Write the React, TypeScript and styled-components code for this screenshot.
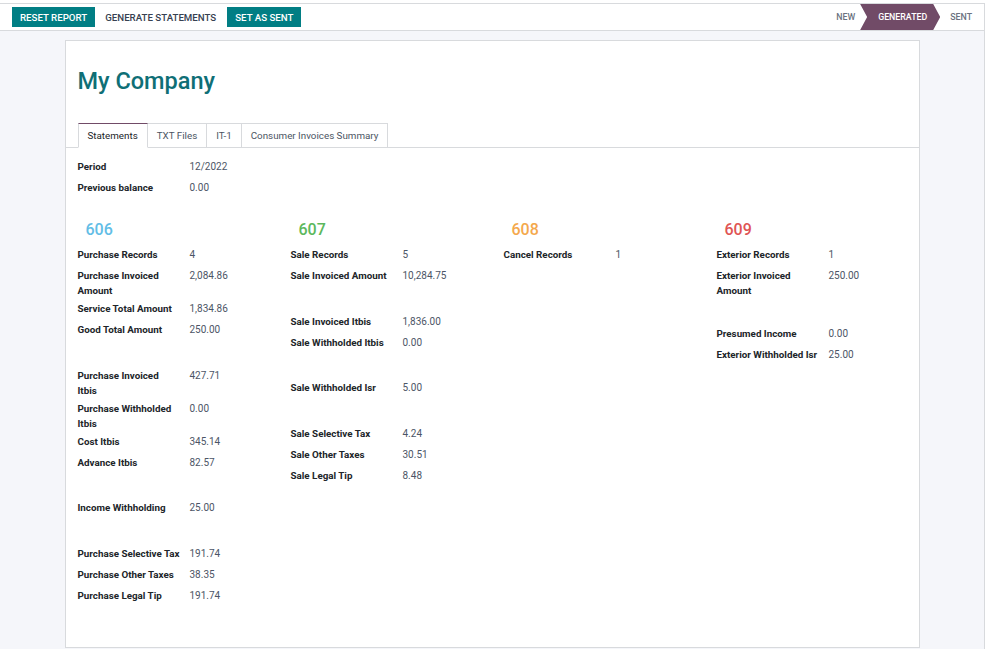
import React from "react";
import styled, { createGlobalStyle } from "styled-components";

const Global = createGlobalStyle`
  html, body { margin: 0; padding: 0; background: #ffffff; }
  body { font-family: Roboto, "Liberation Sans", sans-serif; color: #212529; }
  * { box-sizing: border-box; }
`;

const Frame = styled.div`
  margin-top: 3px;
  width: 985px;
  height: 646px;
  border-top: 1px solid #d8dadd;
  border-right: 1px solid #d8dadd;
  background: #f5f6fa;
  display: flex;
  flex-direction: column;
`;

const ControlPanel = styled.div`
  height: 27px;
  background: #ffffff;
  border-bottom: 1px solid #d8dadd;
  display: flex;
  align-items: stretch;
  justify-content: space-between;
  padding-left: 12px;
`;

const Buttons = styled.div`
  display: flex;
  align-items: center;
`;

const Btn = styled.button<{ $primary?: boolean }>`
  height: 20px;
  padding: 0 8px;
  border: none;
  border-radius: 0;
  font-family: Roboto, "Liberation Sans", sans-serif;
  font-size: 9.7px;
  font-weight: 500;
  text-transform: uppercase;
  cursor: pointer;
  background: ${(p) => (p.$primary ? "#017e84" : "transparent")};
  color: ${(p) => (p.$primary ? "#ffffff" : "#374151")};
  margin-right: ${(p) => (p.$primary ? "2px" : "3px")};
`;

const StatusBar = styled.div`
  display: flex;
  align-items: stretch;
  padding-right: 12px;
`;

const Stage = styled.div<{ $active?: boolean; $pad: string }>`
  display: flex;
  align-items: center;
  font-size: 8.8px;
  font-weight: 500;
  text-transform: uppercase;
  color: ${(p) => (p.$active ? "#ffffff" : "#6b7280")};
  background: ${(p) => (p.$active ? "#714b67" : "transparent")};
  padding: ${(p) => p.$pad};
  clip-path: ${(p) =>
    p.$active
      ? "polygon(0 0, calc(100% - 7px) 0, 100% 50%, calc(100% - 7px) 100%, 0 100%, 7px 50%)"
      : "none"};
`;

const Sheet = styled.div`
  width: 855px;
  height: 608px;
  margin: 9px auto 0;
  background: #ffffff;
  border: 1px solid #d8dadd;
  display: flex;
  flex-direction: column;
`;

const Title = styled.h1`
  margin: 24px 12px 0;
  font-size: 23.5px;
  line-height: 32px;
  font-weight: 500;
  color: #0f6f76;
`;

const TabNav = styled.div`
  margin-top: 26px;
  display: flex;
  padding-left: 12px;
  border-bottom: 1px solid #d8dadd;
`;

const Tab = styled.div<{ $active?: boolean }>`
  height: 25px;
  margin-bottom: -1px;
  padding: 0 9px;
  display: flex;
  align-items: center;
  font-size: 9.8px;
  color: ${(p) => (p.$active ? "#212529" : "#4b5563")};
  background: #ffffff;
  border: 1px solid #d8dadd;
  border-left-width: ${(p) => (p.$active ? "1px" : "0")};
  border-top-color: ${(p) => (p.$active ? "#714b67" : "#d8dadd")};
  border-bottom-color: ${(p) => (p.$active ? "#ffffff" : "#d8dadd")};
`;

const TabContent = styled.div`
  padding: 8px 12px 0;
`;

const Columns = styled.div`
  display: grid;
  grid-template-columns: repeat(4, 213px);
  margin: 0 -12px;
`;

const Column = styled.div`
  padding: 0 12px;
  display: flex;
  flex-direction: column;
`;

const Head = styled.div<{ $color: string }>`
  margin: 22px 0 4px;
  padding-left: 8px;
  font-size: 16px;
  line-height: 20px;
  font-weight: 500;
  color: ${(p) => p.$color};
`;

const Row = styled.div`
  display: grid;
  grid-template-columns: 112px 1fr;
  min-height: 21px;
  align-items: start;
`;

const Label = styled.div`
  padding: 3px 5px 0 0;
  font-size: 9.8px;
  line-height: 15px;
  font-weight: 700;
  color: #212529;
  white-space: pre-line;
`;

const Value = styled.div`
  padding-top: 3px;
  font-size: 10px;
  line-height: 15px;
  color: #4c5566;
`;

const Spacer = styled.div`
  height: 24.5px;
`;

type Item = [string, string] | null;

const sections: { code: string; color: string; items: Item[] }[] = [
  {
    code: "606",
    color: "#62bde6",
    items: [
      ["Purchase Records", "4"],
      ["Purchase Invoiced Amount", "2,084.86"],
      ["Service Total Amount", "1,834.86"],
      ["Good Total Amount", "250.00"],
      null,
      ["Purchase Invoiced\nItbis", "427.71"],
      ["Purchase Withholded Itbis", "0.00"],
      ["Cost Itbis", "345.14"],
      ["Advance Itbis", "82.57"],
      null,
      ["Income Withholding", "25.00"],
      null,
      ["Purchase Selective Tax", "191.74"],
      ["Purchase Other Taxes", "38.35"],
      ["Purchase Legal Tip", "191.74"],
    ],
  },
  {
    code: "607",
    color: "#5cb85c",
    items: [
      ["Sale Records", "5"],
      ["Sale Invoiced Amount", "10,284.75"],
      null,
      ["Sale Invoiced Itbis", "1,836.00"],
      ["Sale Withholded Itbis", "0.00"],
      null,
      ["Sale Withholded Isr", "5.00"],
      null,
      ["Sale Selective Tax", "4.24"],
      ["Sale Other Taxes", "30.51"],
      ["Sale Legal Tip", "8.48"],
    ],
  },
  {
    code: "608",
    color: "#f4a84c",
    items: [["Cancel Records", "1"]],
  },
  {
    code: "609",
    color: "#e05454",
    items: [
      ["Exterior Records", "1"],
      ["Exterior Invoiced Amount", "250.00"],
      null,
      ["Presumed Income", "0.00"],
      ["Exterior Withholded Isr", "25.00"],
    ],
  },
];

export default function App() {
  return (
    <>
      <Global />
      <Frame>
        <ControlPanel>
          <Buttons>
            <Btn $primary>Reset Report</Btn>
            <Btn>Generate Statements</Btn>
            <Btn $primary>Set as Sent</Btn>
          </Buttons>
          <StatusBar>
            <Stage $pad="0 5px 0 0">New</Stage>
            <Stage $active $pad="0 13px 0 18px">Generated</Stage>
            <Stage $pad="0 0 0 10px">Sent</Stage>
          </StatusBar>
        </ControlPanel>
        <Sheet>
          <Title>My Company</Title>
          <TabNav>
            <Tab $active>Statements</Tab>
            <Tab>TXT Files</Tab>
            <Tab>IT-1</Tab>
            <Tab>Consumer Invoices Summary</Tab>
          </TabNav>
          <TabContent>
            <Row>
              <Label>Period</Label>
              <Value>12/2022</Value>
            </Row>
            <Row>
              <Label>Previous balance</Label>
              <Value>0.00</Value>
            </Row>
            <Columns>
              {sections.map((s) => (
                <Column key={s.code}>
                  <Head $color={s.color}>{s.code}</Head>
                  {s.items.map((it, i) =>
                    it ? (
                      <Row key={i}>
                        <Label>{it[0]}</Label>
                        <Value>{it[1]}</Value>
                      </Row>
                    ) : (
                      <Spacer key={i} />
                    )
                  )}
                </Column>
              ))}
            </Columns>
          </TabContent>
        </Sheet>
      </Frame>
    </>
  );
}
